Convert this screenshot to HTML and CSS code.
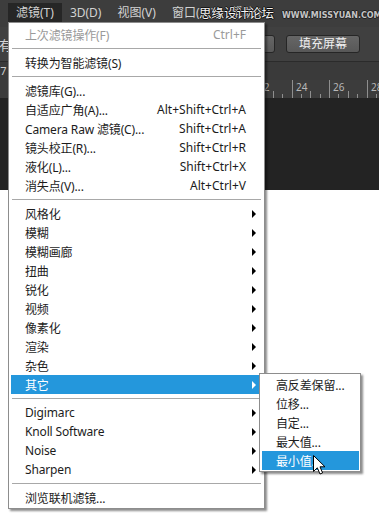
FILE: index.html
```html
<!DOCTYPE html>
<html lang="zh-CN">
<head>
<meta charset="utf-8">
<title>滤镜菜单</title>
<link rel="stylesheet" href="styles.css">
</head>
<body>
<div class="ps">
  <div class="menubar">
    <span class="mb-item active">滤镜(T)</span>
    <span class="mb-item">3D(D)</span>
    <span class="mb-item">视图(V)</span>
    <span class="mb-item">窗口(W)</span>
    <span class="mb-item">帮助(H)</span>
  </div>
  <div class="options">
    <span class="opt-text">所有</span>
    <div class="btns">
      <span class="btn">实际像素</span>
      <span class="btn">填充屏幕</span>
    </div>
  </div>
  <div class="tabs"><span class="tab-text">@ 66.7</span></div>
  <svg class="ruler" width="379" height="18" viewBox="0 0 379 18">
    <g stroke="#8f8f8f" stroke-width="1">
      <line x1="254.5" y1="0" x2="254.5" y2="18"/>
      <line x1="292.5" y1="0" x2="292.5" y2="18"/>
      <line x1="329.5" y1="0" x2="329.5" y2="18"/>
      <line x1="367.5" y1="0" x2="367.5" y2="18"/>
      <line x1="264.5" y1="14" x2="264.5" y2="18"/>
      <line x1="273.5" y1="11" x2="273.5" y2="18"/>
      <line x1="282.5" y1="14" x2="282.5" y2="18"/>
      <line x1="301.5" y1="14" x2="301.5" y2="18"/>
      <line x1="310.5" y1="11" x2="310.5" y2="18"/>
      <line x1="320.5" y1="14" x2="320.5" y2="18"/>
      <line x1="338.5" y1="14" x2="338.5" y2="18"/>
      <line x1="348.5" y1="11" x2="348.5" y2="18"/>
      <line x1="357.5" y1="14" x2="357.5" y2="18"/>
      <line x1="376.5" y1="14" x2="376.5" y2="18"/>
    </g>
    <g class="ruler-num">
      <text x="258" y="11">22</text>
      <text x="296" y="11">24</text>
      <text x="333" y="11">26</text>
      <text x="371" y="11">28</text>
    </g>
  </svg>
  <div class="canvas"></div>
</div>

<div class="watermark">思缘设计论坛</div>
<div class="watermark-url">WWW.MISSYUAN.COM</div>

<div class="menu">
  <div class="item disabled"><span>上次滤镜操作(F)</span><span class="sc">Ctrl+F</span></div>
  <div class="sep"></div>
  <div class="item"><span>转换为智能滤镜(S)</span></div>
  <div class="sep"></div>
  <div class="item"><span>滤镜库(G)...</span></div>
  <div class="item"><span>自适应广角(A)...</span><span class="sc">Alt+Shift+Ctrl+A</span></div>
  <div class="item"><span>Camera Raw 滤镜(C)...</span><span class="sc">Shift+Ctrl+A</span></div>
  <div class="item"><span>镜头校正(R)...</span><span class="sc">Shift+Ctrl+R</span></div>
  <div class="item"><span>液化(L)...</span><span class="sc">Shift+Ctrl+X</span></div>
  <div class="item"><span>消失点(V)...</span><span class="sc">Alt+Ctrl+V</span></div>
  <div class="sep"></div>
  <div class="item"><span>风格化</span><i class="arrow"></i></div>
  <div class="item"><span>模糊</span><i class="arrow"></i></div>
  <div class="item"><span>模糊画廊</span><i class="arrow"></i></div>
  <div class="item"><span>扭曲</span><i class="arrow"></i></div>
  <div class="item"><span>锐化</span><i class="arrow"></i></div>
  <div class="item"><span>视频</span><i class="arrow"></i></div>
  <div class="item"><span>像素化</span><i class="arrow"></i></div>
  <div class="item"><span>渲染</span><i class="arrow"></i></div>
  <div class="item"><span>杂色</span><i class="arrow"></i></div>
  <div class="item hl"><span>其它</span><i class="arrow"></i></div>
  <div class="sep"></div>
  <div class="item"><span class="latin">Digimarc</span><i class="arrow"></i></div>
  <div class="item"><span class="latin">Knoll Software</span><i class="arrow"></i></div>
  <div class="item"><span class="latin">Noise</span><i class="arrow"></i></div>
  <div class="item"><span class="latin">Sharpen</span><i class="arrow"></i></div>
  <div class="sep"></div>
  <div class="item"><span>浏览联机滤镜...</span></div>
</div>

<div class="submenu">
  <div class="item"><span>高反差保留...</span></div>
  <div class="item"><span>位移...</span></div>
  <div class="item"><span>自定...</span></div>
  <div class="item"><span>最大值...</span></div>
  <div class="item hl"><span>最小值...</span></div>
</div>

<svg class="cursor" width="14" height="21" viewBox="0 0 14 21">
  <path d="M0.5 0.5 L0.5 16.5 L4.3 12.8 L7 19 L9.6 17.9 L7 11.8 L12 11.8 Z" fill="#fff" stroke="#000" stroke-width="1" stroke-linejoin="miter"/>
</svg>
</body>
</html>
```

FILE: styles.css
```css
html, body {
  margin: 0;
  padding: 0;
}
body {
  width: 379px;
  height: 520px;
  background: #ffffff;
  position: relative;
  overflow: hidden;
  font-family: "Noto Sans", "Noto Sans CJK SC", sans-serif;
}

.ps {
  height: 190px;
  background: #232323;
  display: flex;
  flex-direction: column;
}

.menubar {
  height: 27px;
  box-sizing: border-box;
  padding: 3px 0 0 8px;
  background: #3d3d3d;
  display: flex;
  align-items: flex-start;
  color: #d2d2d2;
  font-size: 12px;
}
.mb-item {
  height: 19px;
  line-height: 19px;
  padding: 0 8px;
  white-space: nowrap;
}
.mb-item.active {
  background: #262626;
}

.options {
  height: 35px;
  box-sizing: border-box;
  background: #404040;
  border-bottom: 1px solid #2b2b2b;
  display: flex;
  align-items: center;
  color: #d6d6d6;
  font-size: 13px;
}
.opt-text {
  margin-left: -14px;
}
.btns {
  margin-left: auto;
  margin-right: 19px;
  display: flex;
  gap: 11px;
}
.btn {
  width: 74px;
  height: 18px;
  box-sizing: border-box;
  border: 1px solid #262626;
  border-radius: 3px;
  background: linear-gradient(#666666, #585858);
  color: #f0f0f0;
  font-size: 12px;
  line-height: 16px;
  text-align: center;
}

.tabs {
  height: 18px;
  background: #3a3a3a;
  color: #cfcfcf;
  font-size: 11px;
  line-height: 18px;
  overflow: hidden;
}
.tab-text {
  margin-left: -28px;
}

.ruler {
  display: block;
  background: #3c3c3c;
  flex: none;
}
.ruler-num {
  font-family: "Noto Sans", sans-serif;
  font-size: 10px;
  fill: #b8b8b8;
}

.canvas {
  flex: 1;
  background: #232323;
}

.watermark {
  position: absolute;
  left: 199px;
  top: 4px;
  font-family: "Noto Sans CJK SC", sans-serif;
  font-size: 12.5px;
  line-height: 18px;
  color: #f4f4f4;
  text-shadow: 1px 0 0 #111, -1px 0 0 #111, 0 1px 0 #111, 0 -1px 0 #111;
}
.watermark-url {
  position: absolute;
  left: 282px;
  top: 11px;
  font-family: "DejaVu Sans", sans-serif;
  font-weight: bold;
  font-size: 8px;
  letter-spacing: 0;
  line-height: 10px;
  color: #c4c4c4;
  text-shadow: 1px 0 0 #222, -1px 0 0 #222, 0 1px 0 #222, 0 -1px 0 #222;
}

.menu,
.submenu {
  position: absolute;
  background: #ffffff;
  border: 1px solid #8d8d8d;
  box-shadow: 2px 2px 2px rgba(0, 0, 0, 0.45);
  font-size: 12px;
  color: #1c1c1c;
}
.menu {
  left: 8px;
  top: 22px;
  width: 248px;
  padding: 2px 5px 1px 2px;
}
.submenu {
  left: 259px;
  top: 373px;
  width: 97px;
  padding: 1px 1px 1px 2px;
}

.item {
  height: 19px;
  display: flex;
  align-items: center;
  padding: 0 13px 0 14px;
  white-space: nowrap;
}
.item > span:first-child {
  letter-spacing: -0.15px;
}
.item > .latin {
  letter-spacing: -0.3px;
}
.item .sc {
  margin-left: auto;
}
.item.disabled {
  color: #9a9a9a;
}
.item.hl {
  background: #2497dc;
  color: #ffffff;
}
.arrow {
  margin-left: auto;
  margin-right: -10px;
  width: 0;
  height: 0;
  border-left: 4px solid #000;
  border-top: 4px solid transparent;
  border-bottom: 4px solid transparent;
}
.item.hl .arrow {
  border-left-color: #ffffff;
}

.sep {
  height: 9px;
  display: flex;
  align-items: center;
}
.sep::after {
  content: "";
  flex: 1;
  height: 1px;
  margin: 0 -2px 0 1px;
  background: #a8a8a8;
}

.cursor {
  position: absolute;
  left: 313px;
  top: 455px;
}
```
